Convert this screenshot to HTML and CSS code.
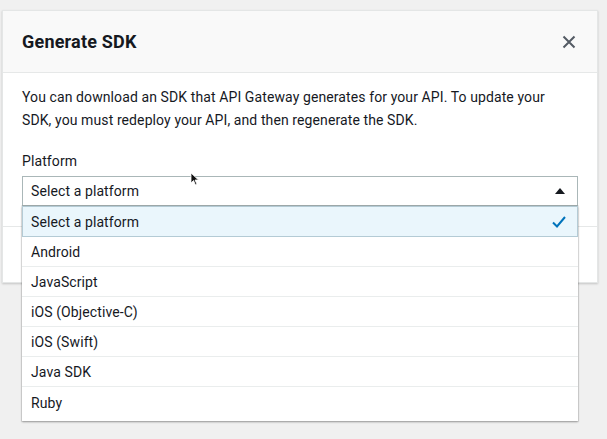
FILE: index.html
```html
<!DOCTYPE html>
<html>
<head>
<meta charset="utf-8">
<link rel="stylesheet" href="styles.css">
</head>
<body>
<div class="page">
  <div class="modal">
    <div class="modal-header">
      <h2 class="title">Generate SDK</h2>
      <button class="close" aria-label="Close">
        <svg width="14" height="14" viewBox="0 0 14 14"><path d="M1.5 1.5 L12.5 12.5 M12.5 1.5 L1.5 12.5" stroke="#545b64" stroke-width="2" fill="none"/></svg>
      </button>
    </div>
    <div class="modal-body">
      <p class="desc">You can download an SDK that API Gateway generates for your API. To update your SDK, you must redeploy your API, and then regenerate the SDK.</p>
      <div class="field">
        <div class="label">Platform</div>
        <div class="select-wrap">
          <div class="select">
            <span>Select a platform</span>
            <svg class="caret" width="12" height="8" viewBox="0 0 12 8"><path d="M6 1 L11 7 L1 7 Z" fill="#16191f"/></svg>
          </div>
          <ul class="options">
            <li class="option selected"><span>Select a platform</span>
              <svg width="16" height="14" viewBox="0 0 16 14"><path d="M2 7.5 L6 11.5 L14 2" stroke="#0073bb" stroke-width="2" fill="none"/></svg>
            </li>
            <li class="option">Android</li>
            <li class="option">JavaScript</li>
            <li class="option">iOS (Objective-C)</li>
            <li class="option">iOS (Swift)</li>
            <li class="option">Java SDK</li>
            <li class="option last">Ruby</li>
          </ul>
          <svg class="cursor" width="10" height="14" viewBox="0 0 10 14"><path d="M1 1 L1 11 L3.5 8.5 L5.5 13 L7 12.3 L5 8 L8.5 8 Z" fill="#111" stroke="#fff" stroke-width="0.8"/></svg>
        </div>
      </div>
    </div>
    <div class="modal-footer"></div>
  </div>
</div>
</body>
</html>
```
FILE: styles.css
```css
* { box-sizing: border-box; }
html, body { margin: 0; padding: 0; }
body {
  background: #f0f0f0;
  font-family: Roboto, "Liberation Sans", sans-serif;
  color: #16191f;
  width: 607px;
  height: 439px;
  overflow: hidden;
  letter-spacing: 0.1px;
}
.page {
  padding: 10px 0 0 2px;
}
.modal {
  width: 596px;
  height: 273px;
  background: #fff;
  border: 1px solid #e4e6e6;
  box-shadow: 0 1px 2px rgba(0,0,0,0.18);
  display: flex;
  flex-direction: column;
}
.modal-header {
  height: 62px;
  background: #f9f9f9;
  border-bottom: 1px solid #e6e8e8;
  display: flex;
  align-items: center;
  justify-content: space-between;
  padding: 0 19px 0 19px;
}
.title {
  margin: 0;
  font-size: 18px;
  font-weight: 700;
  letter-spacing: 0.2px;
}
.close {
  border: 0;
  background: none;
  padding: 0;
  width: 14px;
  height: 14px;
  display: flex;
  margin-right: 2px;
}
.modal-body {
  padding: 13px 19px 20px 19px;
}
.desc {
  margin: 0;
  max-width: 540px;
  font-size: 14px;
  line-height: 23px;
}
.field { margin-top: 18px; }
.label {
  font-size: 14px;
  line-height: 22px;
  margin-bottom: 4px;
}
.select-wrap { position: relative; }
.select {
  height: 30px;
  border: 1px solid #aab7b8;
  display: flex;
  align-items: center;
  justify-content: space-between;
  padding: 0 11px 0 8px;
  font-size: 14px;
  background: #fff;
}
.caret { margin-top: -1px; }
.options {
  position: absolute;
  top: 30px;
  left: 0;
  right: 0;
  margin: 0;
  padding: 0;
  list-style: none;
  background: #fff;
  box-shadow: 0 1px 2px rgba(0,0,0,0.35), 0 0 0 1px rgba(0,0,0,0.06);
  z-index: 5;
}
.option {
  height: 30px;
  border-bottom: 1px solid #eaeded;
  display: flex;
  align-items: center;
  justify-content: space-between;
  padding: 0 10px 0 9px;
  font-size: 14px;
}
.option.selected {
  height: 31px;
  background: #eaf6fc;
  border: 1px solid #b4cbd5;
  padding-left: 8px;
}
.option.last {
  height: 34px;
  border-bottom: 0;
  padding-bottom: 2px;
}
.cursor {
  position: absolute;
  left: 168px;
  top: -4px;
}
.modal-footer {
  border-top: 1px solid #e6e8e8;
  flex: 1;
}
```
